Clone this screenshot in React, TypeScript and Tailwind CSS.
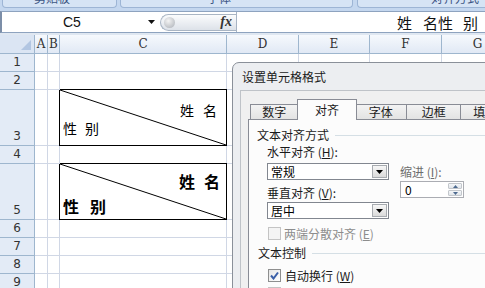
const CJK = "font-['Noto_Sans_CJK_SC','Noto_Sans',sans-serif]";

const ROWS = [
  { n: 1, h: "h-[18px]" },
  { n: 2, h: "h-[18px]" },
  { n: 3, h: "h-[56px]" },
  { n: 4, h: "h-[18px]" },
  { n: 5, h: "h-[56px]" },
  { n: 6, h: "h-[18px]" },
  { n: 7, h: "h-[18px]" },
  { n: 8, h: "h-[18px]" },
  { n: 9, h: "h-[18px]" },
];

const GRID = "grid grid-cols-[35px_13px_12px_167px_72px_71px_72px_72px]";

function Ribbon() {
  return (
    <div className={`flex h-[11px] gap-[3px] bg-[#c4d7ef] pl-[2px] ${CJK}`}>
      <div className="relative h-[8px] w-[115px] overflow-hidden rounded-b-[4px] border border-t-0 border-[#9db5d5] bg-[#d6e4f5]">
        <span className="absolute left-[31px] top-[-11px] text-[12px] text-[#3d5684]">剪贴板</span>
      </div>
      <div className="relative h-[8px] w-[233px] overflow-hidden rounded-b-[4px] border border-t-0 border-[#9db5d5] bg-[#d6e4f5]">
        <span className="absolute left-[86px] top-[-11px] text-[12px] text-[#3d5684]">字体</span>
      </div>
      <div className="relative ml-[1px] h-[8px] flex-1 overflow-hidden rounded-bl-[4px] border border-t-0 border-r-0 border-[#9db5d5] bg-[#d6e4f5]">
        <span className="absolute left-[73px] top-[-11px] text-[12px] text-[#3d5684]">对齐方式</span>
      </div>
    </div>
  );
}

function FormulaBar() {
  return (
    <div className="flex h-[22px] border-y border-[#8ea3bf] border-l-2 border-l-[#7c8ea8] bg-white">
      <div className="flex w-[158px] items-center">
        <span className="ml-[61px] text-[14px] leading-none text-[#111]">C5</span>
        <svg className="ml-auto mr-[5px]" width="7" height="4" viewBox="0 0 7 4">
          <path d="M0 0 H7 L3.5 4 Z" fill="#111" />
        </svg>
      </div>
      <div className="my-auto flex h-[17px] w-[76px] items-center rounded-l-full border border-r-0 border-[#a9b5c4] bg-gradient-to-b from-[#fbfcfd] to-[#dde2e9]">
        <div className="ml-[3px] h-[11px] w-[11px] rounded-full bg-[radial-gradient(circle_at_40%_35%,#f4f4f4,#a9aeb5)]" />
        <span className="ml-auto mr-[4px] font-['Liberation_Serif',serif] text-[14px] font-bold italic leading-none text-[#333]">
          fx
        </span>
      </div>
      <div className="w-px bg-[#a8b4c4]" />
      <div className={`flex flex-1 items-center justify-end pr-[7px] text-[15px] leading-none text-[#111] ${CJK}`}>
        <span>姓</span>
        <span className="ml-[11px]">名</span>
        <span>性</span>
        <span className="ml-[10px]">别</span>
      </div>
    </div>
  );
}

function DiagonalCell({ bold }: { bold?: boolean }) {
  return (
    <div className="relative border-r border-b border-black shadow-[0_-1px_0_#000,-1px_0_0_#000]">
      <svg className="absolute inset-0 h-full w-full" viewBox="0 0 100 100" preserveAspectRatio="none">
        <line x1="0" y1="0" x2="100" y2="100" stroke="#000" strokeWidth="1" vectorEffect="non-scaling-stroke" />
      </svg>
      {bold ? (
        <div className={`flex flex-col text-[16px] font-bold leading-none text-black ${CJK}`}>
          <div className="mt-[9px] flex justify-end pr-[6px]">
            <span>姓</span>
            <span className="ml-[9px]">名</span>
          </div>
          <div className="mt-[9px] flex pl-[3px]">
            <span>性</span>
            <span className="ml-[11px]">别</span>
          </div>
        </div>
      ) : (
        <div className={`flex flex-col text-[14px] leading-none text-black ${CJK}`}>
          <div className="mt-[13px] flex justify-end pr-[9px]">
            <span>姓</span>
            <span className="ml-[9px]">名</span>
          </div>
          <div className="mt-[4px] flex pl-[3px]">
            <span>性</span>
            <span className="ml-[8px]">别</span>
          </div>
        </div>
      )}
    </div>
  );
}

function Sheet() {
  return (
    <div className="border-t-2 border-[#dfe7f1]">
      <div className={`${GRID} h-[19px] font-['DejaVu_Serif','Liberation_Serif',serif] text-[12px] text-[#333]`}>
        <div className="relative border-r border-b border-[#9eb6ce] bg-[#dbe5f3]">
          <svg className="absolute right-[3px] bottom-[3px]" width="10" height="10" viewBox="0 0 10 10">
            <path d="M10 0 V10 H0 Z" fill="#b2c6e2" />
          </svg>
        </div>
        {["A", "B", "C", "D", "E", "F", "G"].map((c) => (
          <div
            key={c}
            className="flex items-center justify-center border-r border-b border-[#9eb6ce] bg-gradient-to-b from-[#f6f9fd] to-[#e1e9f5]"
          >
            {c}
          </div>
        ))}
      </div>
      {ROWS.map((r) => (
        <div key={r.n} className={`${GRID} ${r.h}`}>
          <div className="flex items-end justify-center border-r border-b border-[#9eb6ce] bg-[#e3ebf6] pb-[1px] font-['DejaVu_Sans',sans-serif] text-[12px] leading-[16px] text-[#333]">
            {r.n}
          </div>
          <div className="border-r border-b border-[#d0d7e5]" />
          <div className="border-r border-b border-[#d0d7e5]" />
          {r.n === 3 ? (
            <DiagonalCell />
          ) : r.n === 5 ? (
            <DiagonalCell bold />
          ) : (
            <div className="border-r border-b border-[#d0d7e5]" />
          )}
          <div className="border-r border-b border-[#d0d7e5]" />
          <div className="border-r border-b border-[#d0d7e5]" />
          <div className="border-r border-b border-[#d0d7e5]" />
          <div className="border-r border-b border-[#d0d7e5]" />
        </div>
      ))}
    </div>
  );
}

function DropButton() {
  return (
    <div className="my-[1px] mr-[1px] flex w-[15px] items-center justify-center border border-[#a7abb0] bg-gradient-to-b from-[#f7f7f7] to-[#dadada]">
      <svg width="7" height="4" viewBox="0 0 7 4">
        <path d="M0 0 H7 L3.5 4 Z" fill="#000" />
      </svg>
    </div>
  );
}

function Select({ value }: { value: string }) {
  return (
    <div className="flex h-[17px] w-[122px] border border-[#828790] bg-white">
      <span className="flex-1 pl-[3px] text-[12px] leading-[15px] text-black">{value}</span>
      <DropButton />
    </div>
  );
}

function Checkbox({ checked, disabled }: { checked?: boolean; disabled?: boolean }) {
  return (
    <div
      className={`flex h-[13px] w-[13px] items-center justify-center border ${
        disabled ? "border-[#c4c4c4] bg-[#f4f4f4]" : "border-[#8e8f8f] bg-gradient-to-br from-[#e6e6e6] to-white"
      }`}
    >
      {checked && (
        <svg width="9" height="9" viewBox="0 0 9 9">
          <path d="M1 4.5 L3.5 7.5 L8 1.5" fill="none" stroke="#3a5fa8" strokeWidth="2" />
        </svg>
      )}
    </div>
  );
}

function FormatDialog() {
  return (
    <div className={`absolute left-[232px] top-[62px] h-[240px] w-[270px] rounded-tl-[7px] border border-[#8a9099] bg-[#eceef1] ${CJK}`}>
      <div className="flex h-[27px] items-center pl-[9px] text-[12px] leading-none text-[#1a1a1a]">设置单元格格式</div>
      <div className="ml-[7px] h-full border-t border-l border-[#bfc3c8] bg-[#f0f0f0] pl-[7px] pt-[8px]">
        {/* tabs */}
        <div className="flex h-[20px] items-end pl-[2px] text-[12px] leading-none text-[#1a1a1a]">
          <div className="flex h-[15px] w-[49px] items-center justify-center border border-b-0 border-[#898c95] bg-gradient-to-b from-[#f3f3f3] to-[#e3e3e3]">
            数字
          </div>
          <div className="relative z-10 -mx-[1px] mb-[-1px] flex h-[21px] w-[60px] items-center justify-center border border-b-0 border-[#898c95] bg-[#fcfcfc]">
            对齐
          </div>
          <div className="flex h-[15px] w-[52px] items-center justify-center border border-l-0 border-b-0 border-[#898c95] bg-gradient-to-b from-[#f3f3f3] to-[#e3e3e3]">
            字体
          </div>
          <div className="flex h-[15px] w-[55px] items-center justify-center border border-l-0 border-b-0 border-[#898c95] bg-gradient-to-b from-[#f3f3f3] to-[#e3e3e3]">
            边框
          </div>
          <div className="flex h-[15px] w-[40px] items-center border border-l-0 border-b-0 border-[#898c95] bg-gradient-to-b from-[#f3f3f3] to-[#e3e3e3] pl-[12px]">
            填
          </div>
        </div>
        {/* panel */}
        <div className="h-full border-t border-l border-[#898c95] bg-[#fcfcfc] pl-[8px] pt-[8px] text-[12px] leading-none text-[#1a1a1a]">
          <div className="flex h-[14px] items-center">
            <span>文本对齐方式</span>
            <div className="ml-[6px] h-px flex-1 bg-[#d5dfe5]" />
          </div>
          <div className="flex pl-[10px]">
            <div className="flex flex-col">
              <div className="mt-[3px] h-[14px] leading-[14px]">
                水平对齐 (<span className="underline">H</span>):
              </div>
              <div className="mt-[4px]">
                <Select value="常规" />
              </div>
              <div className="mt-[6px] h-[14px] leading-[14px]">
                垂直对齐 (<span className="underline">V</span>):
              </div>
              <div className="mt-[2px]">
                <Select value="居中" />
              </div>
            </div>
            <div className="ml-[11px] flex flex-col">
              <div className="mt-[23px] h-[14px] leading-[14px] text-[#6d6d6d]">
                缩进 (<span className="underline">I</span>):
              </div>
              <div className="mt-[2px] flex h-[17px] w-[64px] border border-[#abadb3] bg-white">
                <span className="flex-1 pl-[4px] text-[12px] leading-[15px] text-black">0</span>
                <div className="my-[1px] mr-[1px] flex w-[14px] flex-col gap-px">
                  <div className="flex flex-1 items-center justify-center rounded-[1px] border border-[#c3c7cc] bg-gradient-to-b from-[#f5f7f9] to-[#e1e5ea]">
                    <svg width="5" height="3" viewBox="0 0 5 3">
                      <path d="M0 3 H5 L2.5 0 Z" fill="#4d6a8f" />
                    </svg>
                  </div>
                  <div className="flex flex-1 items-center justify-center rounded-[1px] border border-[#c3c7cc] bg-gradient-to-b from-[#f5f7f9] to-[#e1e5ea]">
                    <svg width="5" height="3" viewBox="0 0 5 3">
                      <path d="M0 0 H5 L2.5 3 Z" fill="#4d6a8f" />
                    </svg>
                  </div>
                </div>
              </div>
            </div>
          </div>
          <div className="mt-[8px] flex h-[13px] items-center pl-[11px] text-[#8d8d8d]">
            <Checkbox disabled />
            <span className="ml-[3px]">
              两端分散对齐 (<span className="underline">E</span>)
            </span>
          </div>
          <div className="mt-[6px] flex h-[14px] items-center pl-[1px]">
            <span>文本控制</span>
            <div className="ml-[6px] h-px flex-1 bg-[#d5dfe5]" />
          </div>
          <div className="mt-[9px] flex h-[13px] items-center pl-[11px]">
            <Checkbox checked />
            <span className="ml-[4px]">
              自动换行 (<span className="underline">W</span>)
            </span>
          </div>
          <div className="mt-[5px] flex h-[13px] items-center pl-[11px] text-[#8d8d8d]">
            <Checkbox disabled />
            <span className="ml-[4px]">
              缩小字体填充 (<span className="underline">K</span>)
            </span>
          </div>
        </div>
      </div>
    </div>
  );
}

export default function App() {
  return (
    <div className="relative h-[288px] w-[485px] overflow-hidden bg-white font-['Liberation_Sans',sans-serif]">
      <Ribbon />
      <FormulaBar />
      <Sheet />
      <FormatDialog />
    </div>
  );
}
